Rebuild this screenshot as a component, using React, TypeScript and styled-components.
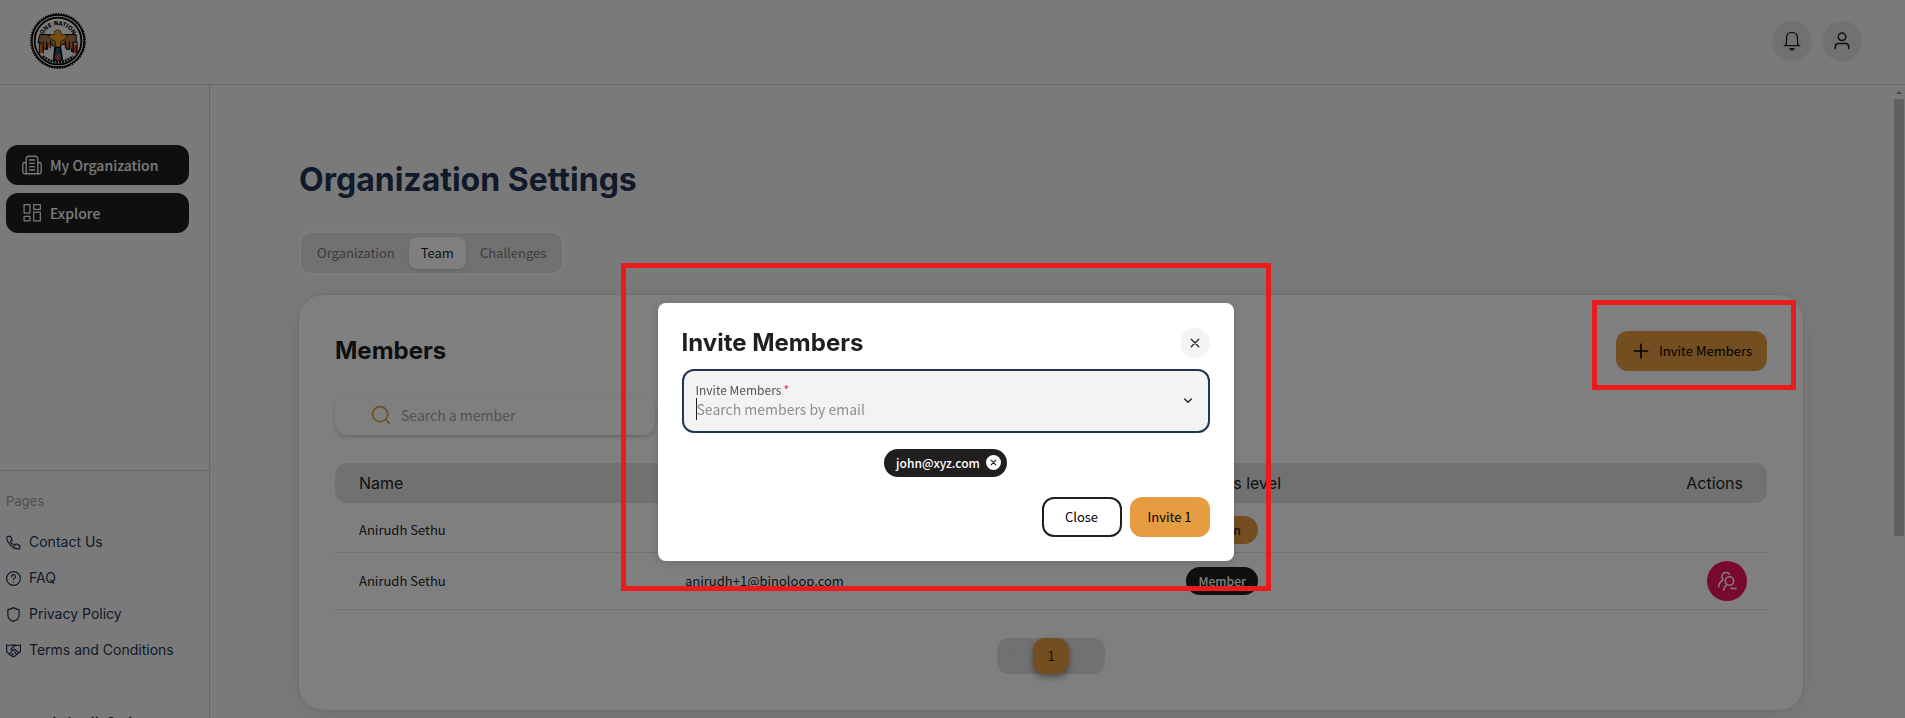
import React from "react";
import styled, { createGlobalStyle, css } from "styled-components";

const body = `"Noto Sans CJK SC", "Noto Sans", sans-serif`;
const display = `"Inter", "Noto Sans", sans-serif`;

const GlobalStyle = createGlobalStyle`
  * { box-sizing: border-box; }
  body { margin: 0; background: #f5f5f5; color: #201e1f; font-family: ${body}; font-size: 14px; line-height: 20px; overflow: hidden; }
  button, input { font: inherit; color: inherit; }
  button { cursor: pointer; border: 0; padding: 0; }
  a { color: inherit; text-decoration: none; }
  h1, h2, p, ul { margin: 0; padding: 0; }
  ul { list-style: none; }
  svg { display: block; flex: none; }
`;

const Page = styled.div`
  display: flex;
  flex-direction: column;
  height: 100vh;
  overflow: hidden;
`;

const Header = styled.header`
  display: flex;
  align-items: center;
  justify-content: space-between;
  flex: none;
  height: 85px;
  padding: 0 43px 3px 30px;
  border-bottom: 1px solid #d0d0d0;
`;

const HeaderActions = styled.div`
  display: flex;
  gap: 10px;
`;

const RoundButton = styled.button`
  display: grid;
  place-items: center;
  width: 40px;
  height: 40px;
  border-radius: 20px;
  background: #e2e2e2;
`;

const Shell = styled.div`
  display: flex;
  flex: 1;
  min-height: 0;
`;

const Sidebar = styled.aside`
  display: flex;
  flex-direction: column;
  flex: none;
  width: 210px;
  border-right: 1px solid #d0d0d0;
  overflow: hidden;
`;

const MainNav = styled.nav`
  display: flex;
  flex-direction: column;
  flex: none;
  gap: 8px;
  height: 386px;
  padding: 60px 20px 0 6px;
  border-bottom: 1px solid #d0d0d0;
`;

const MainLink = styled.a`
  display: flex;
  align-items: center;
  gap: 8px;
  height: 40px;
  padding: 0 16px;
  border-radius: 12px;
  background: #201e1f;
  color: #f5f5f5;
  font-size: 14px;
  font-weight: 500;
`;

const PagesNav = styled.nav`
  flex: none;
  padding: 18px 6px 0;
  font-family: ${display};
  line-height: 24px;
`;

const PagesTitle = styled.p`
  color: #9c9ca0;
  font-size: 13px;
  margin-bottom: 17px;
`;

const PagesList = styled.ul`
  display: flex;
  flex-direction: column;
  gap: 12px;
  color: #233554;
  font-size: 14px;

  a { display: flex; align-items: center; gap: 8px; }
`;

const UserName = styled.p`
  padding: 50px 0 0 50px;
  font-size: 14px;
  font-weight: 500;
  white-space: nowrap;
`;

const Content = styled.main`
  flex: 1;
  min-width: 0;
  padding: 76px 91px 0 89px;
  overflow: hidden;
`;

const PageTitle = styled.h1`
  color: #233554;
  font-family: ${display};
  font-size: 32px;
  font-weight: 700;
  line-height: 38px;
`;

const Tabs = styled.div`
  display: flex;
  gap: 2px;
  width: fit-content;
  margin-top: 32px;
  padding: 4px;
  border: 2px solid #fafafa;
  border-radius: 12px;
  background: #e2e2e2;
`;

const Tab = styled.button<{ $active?: boolean }>`
  height: 32px;
  padding: 0 12px;
  border-radius: 8px;
  background: transparent;
  color: #78787c;
  font-size: 13px;
  ${({ $active }) => $active && css`
    background: #ffffff;
    color: #201e1f;
    box-shadow: 0 1px 3px rgba(0, 0, 0, 0.15);
  `}
`;

const Card = styled.section`
  margin-top: 20px;
  padding: 36px;
  border-radius: 24px;
  background: #ffffff;
  box-shadow: 0 0 2px rgba(0, 0, 0, 0.15), 0 4px 24px rgba(0, 0, 0, 0.1);
`;

const CardHead = styled.div`
  display: flex;
  align-items: center;
  justify-content: space-between;
`;

const SectionTitle = styled.h2`
  font-family: ${display};
  font-size: 24px;
  font-weight: 700;
  line-height: 32px;
`;

const Button = styled.button<{ $outline?: boolean }>`
  display: flex;
  align-items: center;
  justify-content: center;
  gap: 8px;
  min-width: 80px;
  height: 40px;
  padding: 0 15px;
  border-radius: 12px;
  background: #e69c40;
  color: #000000;
  font-size: 13px;
  ${({ $outline }) => $outline && css`
    border: 2px solid #201e1f;
    background: #ffffff;
  `}
`;

const Search = styled.label`
  display: flex;
  align-items: center;
  gap: 10px;
  width: 320px;
  height: 40px;
  margin-top: 24px;
  padding: 0 36px;
  border-radius: 12px;
  box-shadow: 0 2px 4px rgba(0, 0, 0, 0.2);

  input { flex: 1; min-width: 0; padding: 0; border: 0; outline: 0; background: transparent; font-size: 14px; }
  input::placeholder { color: #a3a7b0; opacity: 1; }
`;

const Table = styled.table`
  width: 100%;
  margin-top: 28px;
  border-collapse: separate;
  border-spacing: 0;
  table-layout: fixed;
  text-align: left;

  th { height: 40px; padding: 0 24px; background: #e2e2e2; font-family: ${display}; font-size: 16px; font-weight: 400; }
  th:first-child { width: 326px; border-radius: 12px 0 0 12px; }
  th:nth-child(2) { width: 35%; }
  th:last-child { border-radius: 0 12px 12px 0; text-align: right; }
  td { height: 50px; padding: 4px 24px 0; border-bottom: 1px solid #e2e2e2; font-size: 13px; }
  tr:last-child td { height: 57px; padding-top: 0; }
  td:last-child { padding-right: 20px; }
`;

const Tag = styled.span<{ $dark?: boolean }>`
  display: flex;
  align-items: center;
  justify-content: center;
  width: fit-content;
  min-width: 72px;
  height: 28px;
  padding: 0 12px;
  border-radius: 14px;
  background: ${({ $dark }) => ($dark ? "#201e1f" : "#e69c40")};
  color: ${({ $dark }) => ($dark ? "#ffffff" : "#201e1f")};
  font-size: 12px;
  font-weight: 500;
`;

const RemoveButton = styled(RoundButton)`
  margin-left: auto;
  background: #f31260;
  color: #ffffff;
`;

const Pagination = styled.nav`
  display: flex;
  width: 108px;
  margin: 28px auto 0;
  border-radius: 12px;
  background: #e2e2e2;
`;

const PageButton = styled.button<{ $active?: boolean }>`
  display: grid;
  place-items: center;
  width: 36px;
  height: 36px;
  border-radius: 12px;
  background: transparent;
  color: #d0d0d2;
  font-size: 13px;
  ${({ $active }) => $active && css`
    background: #e69c40;
    color: #201e1f;
    box-shadow: 0 3px 6px rgba(0, 0, 0, 0.4);
  `}
`;

const ScrollTrack = styled.div`
  display: flex;
  flex-direction: column;
  flex: none;
  width: 11px;
  padding: 6px 1px 0 0;
  align-items: center;
`;

const ScrollThumb = styled.div`
  width: 10px;
  height: 437px;
  margin-top: 5px;
  background: #c1c1c1;
`;

const Overlay = styled.div`
  position: fixed;
  inset: 0;
  display: flex;
  align-items: center;
  justify-content: center;
  padding: 145px 14px 0 0;
  background: rgba(0, 0, 0, 0.5);
`;

const Modal = styled.section`
  width: 576px;
  padding: 24px;
  border-radius: 8px;
  background: #ffffff;
  box-shadow: 0 2px 10px rgba(0, 0, 0, 0.15);
`;

const CloseIconButton = styled(RoundButton)`
  width: 30px;
  height: 30px;
  background: #f4f4f4;
`;

const Combo = styled.div`
  display: flex;
  align-items: center;
  height: 64px;
  margin-top: 10px;
  padding: 0 12px;
  border: 2px solid #233554;
  border-radius: 12px;
  background: #f3f3f3;
`;

const Field = styled.label`
  display: flex;
  flex-direction: column;
  flex: 1;
  color: #52525b;
  font-size: 12px;
  line-height: 16px;

  input { height: 22px; padding: 0; border: 0; outline: 0; background: transparent; font-size: 14px; color: #201e1f; }
  input::placeholder { color: #8f8f93; opacity: 1; }
`;

const FieldRow = styled.span`
  display: flex;
  input { flex: 1; }
`;

const Caret = styled.span`
  width: 1px;
  height: 22px;
  background: #201e1f;
`;

const Required = styled.span`
  margin-left: 2px;
  color: #f31260;
`;

const IconButton = styled.button`
  display: grid;
  place-items: center;
  background: transparent;
`;

const Chips = styled.div`
  display: flex;
  justify-content: center;
  margin-top: 16px;
`;

const Chip = styled.span`
  display: flex;
  align-items: center;
  gap: 6px;
  height: 28px;
  padding: 0 6px 0 12px;
  border-radius: 14px;
  background: #201e1f;
  color: #ffffff;
  font-size: 12px;
  font-weight: 500;
`;

const ChipClose = styled(RoundButton)`
  width: 15px;
  height: 15px;
  background: #ffffff;
  color: #201e1f;
`;

const ModalActions = styled.div`
  display: flex;
  justify-content: flex-end;
  gap: 8px;
  margin-top: 20px;
`;

const Highlight = styled.div<{ $area: "modal" | "button" }>`
  position: fixed;
  border: 5px solid #e81c1c;
  pointer-events: none;
  ${({ $area }) => $area === "modal"
    ? css`top: 263px; left: calc(50% - 332px); width: 650px; height: 328px;`
    : css`top: 300px; right: 109px; width: 204px; height: 90px;`}
`;

const Icon = ({ size = 20, stroke = 1.5, children }: { size?: number; stroke?: number; children: React.ReactNode }) => (
  <svg width={size} height={size} viewBox="0 0 24 24" fill="none" stroke="currentColor" strokeWidth={stroke} strokeLinecap="round" strokeLinejoin="round" aria-hidden="true">
    {children}
  </svg>
);

const Logo = () => (
  <svg width="56" height="56" viewBox="0 0 57 57" role="img" aria-label="One Nation">
    <circle cx="28.5" cy="28.5" r="26.6" fill="#f5f5f5" stroke="#000" strokeWidth="1.6" />
    <circle cx="28.5" cy="28.5" r="27.6" fill="none" stroke="#000" strokeWidth="1.6" strokeDasharray="1.6 1.1" />
    <circle cx="28.5" cy="28.5" r="23.8" fill="none" stroke="#000" strokeWidth="1.8" />
    <path id="logo-arc" d="M12 29a16.500 16.500 0 0 1 33 0" fill="none" />
    <text fontFamily="DejaVu Sans Condensed, Liberation Sans, sans-serif" fontSize="6" fontWeight="700" fill="#000"><textPath href="#logo-arc" startOffset="50%" textAnchor="middle">ONE NATION</textPath></text>
    <path d="M10 22h11l5 2h5l5-2h11v8h-3v9h-2v-5h-2v3h-3v-5h-4l-3 3 1 13h-7l1-13-3-3h-4v5h-3v-3h-2v5h-2v-9h-3z" fill="#a8784c" stroke="#000" strokeWidth="1" />
    <path d="M10 32h3v9h-3zM14 31h2v5h-2zM18 30h2v5h-2zM37 30h2v5h-2zM41 31h2v5h-2z" fill="#d06818" />
    <path d="M45 32h3v9h-3z" fill="#d82828" />
    <path d="M9.500 29v12M13.500 29v12M17 29v8M21 28v8M36 28v8M40 29v8M44 29v12M48 29v12" stroke="#000" strokeWidth="1" />
    <path d="M24.500 19l3-2 3.500 1 1 4 7 1-4 4-4 2v6h-5v-6l-4-2-4-4 7-1z" fill="#e8a020" stroke="#000" strokeWidth=".6" />
    <path d="M26 35h5l2 13h-9z" fill="#205a80" stroke="#000" strokeWidth="1.4" />
    <path d="M27 43l1.500-2 2 2v5h-3.500z" fill="#e83c24" />
    <path d="M13 44q15.500 12 31 0" fill="none" stroke="#000" strokeWidth="2.6" strokeDasharray="2 1" />
  </svg>
);

const BuildingIcon = () => (
  <Icon size={20} stroke={1.6}>
    <path d="M5 22.500V4a3 3 0 0 1 3-2.500h8A3 3 0 0 1 19 4v18.500M5 9H3.500a2.500 2.500 0 0 0-2.500 2.500V20a2.500 2.500 0 0 0 2.500 2.500h17A2.500 2.500 0 0 0 23 20v-8.500A2.500 2.500 0 0 0 20.500 9H19M9 6h6M9 10h6M9 14h6M9 18h6" />
  </Icon>
);

const DashboardIcon = () => (
  <Icon size={20} stroke={1.5}>
    <path d="M2.500 2h7v10h-7zM14 2h8v5.500h-8zM14 11h8v10.500h-8zM2.500 16h7v5.500h-7z" />
  </Icon>
);

const pages = [
  { label: "Contact Us", icon: <path d="M3 2h4l3 6-3 2c1 3 4 6 7 7l2-3 6 3v4c0 1-1 2-3 1C10 22 2 12 1 5c0-2 1-3 2-3z" /> },
  { label: "FAQ", icon: <><circle cx="12" cy="12" r="11" /><path d="M9 9a3 3 0 1 1 4.500 2.500c-1 .6-1.500 1-1.500 2M12 17v.3" /></> },
  { label: "Privacy Policy", icon: <path d="M12 1c3 2 5 3 9 3v9c0 5-4 8-9 10-5-2-9-5-9-10V4c4 0 6-1 9-3z" /> },
  { label: "Terms and Conditions", icon: <path d="M1 3l4 1 7-1 7 1 4-1v11l-3 2-7 6-4-1-6-5-2-3V3zM12 6L8 10c1 3 4 2 6 0l6 5M12 6l3-2M6 17l3-3M9 20l3-3M14 14l3 4" /> },
];

const members = [
  { name: "Anirudh Sethu", email: "anirudh@binoloop.com", level: "Admin" },
  { name: "Anirudh Sethu", email: "anirudh+1@binoloop.com", level: "Member" },
];

export default function App() {
  return (
    <>
      <GlobalStyle />
      <Page>
        <Header>
          <a href="#home"><Logo /></a>
          <HeaderActions>
            <RoundButton aria-label="Notifications">
              <Icon><path d="M2.500 17.500h19M4.500 17.500C5.500 15 5.500 12 5.500 8.500 5.500 4.500 8 1.500 12 1.500s6.500 3 6.500 7c0 3.500 0 6.500 1 9" /><path d="M9.500 21c.5 2.300 4.500 2.300 5 0z" fill="currentColor" /></Icon>
            </RoundButton>
            <RoundButton aria-label="Account">
              <Icon stroke={1.8}><circle cx="12" cy="7" r="4.500" /><path d="M4 21v-2a4 4 0 0 1 4-4h8a4 4 0 0 1 4 4v2" /></Icon>
            </RoundButton>
          </HeaderActions>
        </Header>
        <Shell>
          <Sidebar>
            <MainNav>
              <MainLink href="#organization"><BuildingIcon />My Organization</MainLink>
              <MainLink href="#explore"><DashboardIcon />Explore</MainLink>
            </MainNav>
            <PagesNav>
              <PagesTitle>Pages</PagesTitle>
              <PagesList>
                {pages.map((page) => (
                  <li key={page.label}><a href="#page"><Icon size={15} stroke={2}>{page.icon}</Icon>{page.label}</a></li>
                ))}
              </PagesList>
            </PagesNav>
            <UserName>Anirudh Sethu</UserName>
          </Sidebar>
          <Content>
            <PageTitle>Organization Settings</PageTitle>
            <Tabs role="tablist">
              <Tab role="tab">Organization</Tab>
              <Tab role="tab" aria-selected $active>Team</Tab>
              <Tab role="tab">Challenges</Tab>
            </Tabs>
            <Card>
              <CardHead>
                <SectionTitle>Members</SectionTitle>
                <Button><Icon size={20} stroke={2}><path d="M12 4v16M4 12h16" /></Icon>Invite Members</Button>
              </CardHead>
              <Search>
                <Icon size={20} stroke={2}><circle cx="11" cy="11" r="9" stroke="#e69c40" /><path d="M18 18l4 4" stroke="#e69c40" /></Icon>
                <input type="search" aria-label="Search a member" placeholder="Search a member" />
              </Search>
              <Table>
                <thead><tr><th>Name</th><th>Email</th><th>Access level</th><th>Actions</th></tr></thead>
                <tbody>
                  {members.map((m) => (
                    <tr key={m.email}>
                      <td>{m.name}</td>
                      <td>{m.email}</td>
                      <td><Tag $dark={m.level === "Member"}>{m.level}</Tag></td>
                      <td>
                        {m.level === "Member" && (
                          <RemoveButton aria-label="Remove member">
                            <Icon size={20} stroke={1.8}><circle cx="15" cy="12" r="5" /><path d="M7.500 10.500A5 5 0 1 1 15 4M2 19c0-4 2-6 5-8M8 23c0-3 2-5 4-7M17 21h6" /></Icon>
                          </RemoveButton>
                        )}
                      </td>
                    </tr>
                  ))}
                </tbody>
              </Table>
              <Pagination aria-label="Pages of members">
                <PageButton aria-label="Previous page"><Icon size={12}><path d="M15 4l-8 8 8 8" /></Icon></PageButton>
                <PageButton $active>1</PageButton>
                <PageButton aria-label="Next page"><Icon size={12}><path d="M9 4l8 8-8 8" /></Icon></PageButton>
              </Pagination>
            </Card>
          </Content>
          <ScrollTrack aria-hidden="true">
            <svg width="6" height="3" viewBox="0 0 6 3"><path d="M0 3l3-3 3 3z" fill="#888" /></svg>
            <ScrollThumb />
          </ScrollTrack>
        </Shell>
      </Page>
      <Overlay>
        <Modal role="dialog" aria-modal="true" aria-labelledby="invite-title">
          <CardHead>
            <SectionTitle id="invite-title">Invite Members</SectionTitle>
            <CloseIconButton aria-label="Close dialog"><Icon size={10} stroke={3}><path d="M3 3l18 18M21 3L3 21" /></Icon></CloseIconButton>
          </CardHead>
          <Combo>
            <Field>
              <span>Invite Members<Required>*</Required></span>
              <FieldRow><Caret /><input type="email" placeholder="Search members by email" /></FieldRow>
            </Field>
            <IconButton aria-label="Show members"><Icon size={16} stroke={2}><path d="M7 9l5 5 5-5" /></Icon></IconButton>
          </Combo>
          <Chips>
            <Chip>john@xyz.com<ChipClose aria-label="Remove john@xyz.com"><Icon size={7} stroke={4}><path d="M4 4l16 16M20 4L4 20" /></Icon></ChipClose></Chip>
          </Chips>
          <ModalActions>
            <Button $outline>Close</Button>
            <Button>Invite 1</Button>
          </ModalActions>
        </Modal>
      </Overlay>
      <Highlight $area="modal" />
      <Highlight $area="button" />
    </>
  );
}
